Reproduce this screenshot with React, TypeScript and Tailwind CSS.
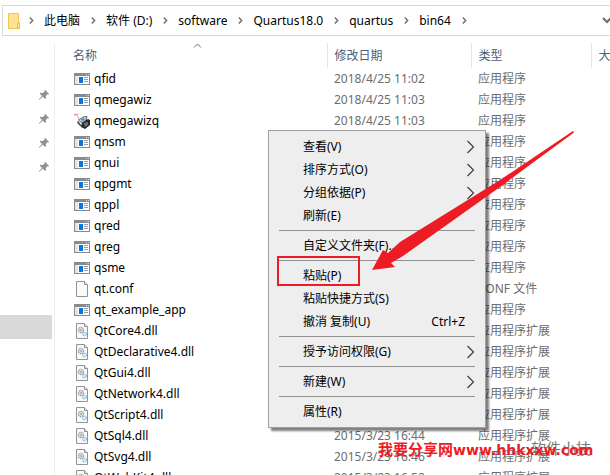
import type { ReactNode } from 'react';

type FileKind = 'app' | 'wizard' | 'conf' | 'dll';

interface FileEntry {
  name: string;
  date: string;
  kind: FileKind;
}

interface MenuEntry {
  label: string;
  shortcut?: string;
  submenu?: boolean;
  marked?: boolean;
}

const PATH = ['此电脑', '软件 (D:)', 'software', 'Quartus18.0', 'quartus', 'bin64'];

const TYPE_LABELS: Record<FileKind, string> = {
  app: '应用程序',
  wizard: '应用程序',
  conf: 'CONF 文件',
  dll: '应用程序扩展',
};

const FILES: FileEntry[] = [
  { name: 'qfid', date: '2018/4/25 11:02', kind: 'app' },
  { name: 'qmegawiz', date: '2018/4/25 11:03', kind: 'app' },
  { name: 'qmegawizq', date: '2018/4/25 11:03', kind: 'wizard' },
  { name: 'qnsm', date: '2018/4/25 11:03', kind: 'app' },
  { name: 'qnui', date: '2018/4/25 11:03', kind: 'app' },
  { name: 'qpgmt', date: '2018/4/25 11:03', kind: 'app' },
  { name: 'qppl', date: '2018/4/25 11:03', kind: 'app' },
  { name: 'qred', date: '2018/4/25 11:03', kind: 'app' },
  { name: 'qreg', date: '2018/4/25 11:03', kind: 'app' },
  { name: 'qsme', date: '2018/4/25 11:03', kind: 'app' },
  { name: 'qt.conf', date: '2018/4/25 11:03', kind: 'conf' },
  { name: 'qt_example_app', date: '2018/4/25 11:03', kind: 'app' },
  { name: 'QtCore4.dll', date: '2015/3/23 16:42', kind: 'dll' },
  { name: 'QtDeclarative4.dll', date: '2015/3/23 16:48', kind: 'dll' },
  { name: 'QtGui4.dll', date: '2015/3/23 16:44', kind: 'dll' },
  { name: 'QtNetwork4.dll', date: '2015/3/23 16:43', kind: 'dll' },
  { name: 'QtScript4.dll', date: '2015/3/23 16:45', kind: 'dll' },
  { name: 'QtSql4.dll', date: '2015/3/23 16:44', kind: 'dll' },
  { name: 'QtSvg4.dll', date: '2015/3/23 16:46', kind: 'dll' },
  { name: 'QtWebKit4.dll', date: '2015/3/23 16:52', kind: 'dll' },
];

const MENU: MenuEntry[][] = [
  [
    { label: '查看(V)', submenu: true },
    { label: '排序方式(O)', submenu: true },
    { label: '分组依据(P)', submenu: true },
    { label: '刷新(E)' },
  ],
  [{ label: '自定义文件夹(F)...' }],
  [
    { label: '粘贴(P)', marked: true },
    { label: '粘贴快捷方式(S)' },
    { label: '撤消 复制(U)', shortcut: 'Ctrl+Z' },
  ],
  [{ label: '授予访问权限(G)', submenu: true }],
  [{ label: '新建(W)', submenu: true }],
  [{ label: '属性(R)' }],
];

function FolderIcon() {
  return (
    <svg width="14" height="18" viewBox="0 0 14 18" className="shrink-0">
      <path d="M1.500 1.500h10v9.500h1v5.500h-11z" fill="#ffe394" stroke="#f0c64f" />
      <path d="M10.500 16V11.500l2-1V16z" fill="#fff0b8" stroke="#e9bb3d" />
    </svg>
  );
}

function Crumb({ children }: { children: ReactNode }) {
  return (
    <li className="flex items-center">
      <svg width="5" height="7" viewBox="0 0 5 7" className="mr-[10px] shrink-0">
        <path d="M.8.6 3.700 3.500.8 6.400" fill="none" stroke="#6d6d6d" strokeWidth="1.400" />
      </svg>
      {children}
    </li>
  );
}

function AppIcon() {
  return (
    <svg width="16" height="16" viewBox="0 0 16 16" shapeRendering="crispEdges">
      <path d="M0 2h16v12H0z" fill="#868b90" />
      <path d="M12 3h1v1h-1zM14 3h1v1h-1z" fill="#d5d8da" />
      <path d="M1 5h14v8H1z" fill="#fff" />
      <path d="M1 5h3v8H1z" fill="#e6e6e6" />
      <path d="M5 6h4v6H5z" fill="#0b75d8" />
      <path d="M10 6h4v1h-4zM10 8h4v1h-4zM10 10h4v1h-4z" fill="#9b9b9b" />
    </svg>
  );
}

function WizardIcon() {
  return (
    <svg width="16" height="16" viewBox="0 0 16 16">
      <path d="M0 2.500 1.500 1.200 3 2l1-1M3.500 3.500l1.500 2" fill="none" stroke="#e58a86" strokeWidth="1.100" />
      <path d="M8 9.500 14 6l2 1v5l-5 4-4-2z" fill="#242426" />
      <path d="M9.500 10.500l4-2 1 3-3.500 2.500z" fill="#6f7174" />
      <path d="M4.500 7 9 4l4-.5L12 7 8 10z" fill="#c3daec" stroke="#4c5a66" strokeWidth=".9" />
      <path d="M7 7l3-1.500M10.500 6 8 8.500" stroke="#2f6fa8" />
      <path d="M3.500 8.500 7 13" stroke="#4a4a4c" strokeWidth="1.600" />
      <path d="M3 10l3 3.500" stroke="#c4c4c4" />
    </svg>
  );
}

function PageIcon({ gears }: { gears?: boolean }) {
  return (
    <svg width="16" height="16" viewBox="0 0 16 16">
      <path d="M2.500.5h8l3 3v12h-11z" fill="#f9fafa" stroke="#8f9395" />
      <path d="M10.500.5v3h3" fill="#e3e5e6" stroke="#8f9395" />
      {gears && (
        <>
          <circle cx="7" cy="7" r="2.600" fill="#eceeef" stroke="#96999b" strokeWidth="1.200" strokeDasharray="1.300 .6" />
          <circle cx="7" cy="7" r="1" fill="none" stroke="#96999b" strokeWidth=".8" />
          <circle cx="10.500" cy="11" r="1.900" fill="#dcedf8" stroke="#8dbddd" strokeWidth="1.200" strokeDasharray="1.100 .5" />
        </>
      )}
    </svg>
  );
}

function FileIcon({ kind }: { kind: FileKind }) {
  if (kind === 'app') return <AppIcon />;
  if (kind === 'wizard') return <WizardIcon />;
  return <PageIcon gears={kind === 'dll'} />;
}

function PinIcon() {
  return (
    <svg width="12" height="12" viewBox="0 0 12 12">
      <path
        d="M7 .8 11.200 5l-1.200.5-.6-.2-1.600 1.800.2 2.200-1 .8-2.200-2.300L1.200 11l-.4-.4 3.100-3.700L1.800 4.800l.8-1 2.200.2L6.700 2.400 6.400 1.700z"
        fill="#8b959b"
      />
    </svg>
  );
}

function ContextMenu() {
  return (
    <div
      role="menu"
      className="absolute top-[130px] left-[268px] w-[218px] border border-[#a0a0a0] bg-[#eeeeee] py-1 text-black shadow-[3px_3px_2px_rgba(0,0,0,0.5)]"
    >
      {MENU.map((group, index) => (
        <div key={group[0].label}>
          {index > 0 && <hr className="my-[3px] mr-[10px] ml-[10px] border-[#919191]" />}
          {group.map((item) => (
            <button
              key={item.label}
              type="button"
              role="menuitem"
              className="relative flex h-[23px] w-full items-center justify-between pr-[10px] pl-[34px]"
            >
              <span>{item.label}</span>
              {item.shortcut && <span className="mr-[10px]">{item.shortcut}</span>}
              {item.submenu && (
                <svg width="9" height="14" viewBox="0 0 9 14">
                  <path d="M1.500 1l6 6-6 6" fill="none" stroke="#3b3b4d" strokeWidth="1.200" />
                </svg>
              )}
              {item.marked && (
                <span className="absolute -top-2 left-2 h-[30px] w-[83px] border-2 border-[#ed1c24]" />
              )}
            </button>
          ))}
        </div>
      ))}
    </div>
  );
}

export default function App() {
  return (
    <div className="relative flex h-screen flex-col overflow-hidden bg-white font-['Noto_Sans','Noto_Sans_CJK_SC',sans-serif] text-[12px] leading-4 text-black">
      <nav className="mt-[5px] ml-0.5 flex h-[31px] shrink-0 items-center border border-r-0 border-[#d9d9d9] pl-1">
        <FolderIcon />
        <ol className="ml-2 flex flex-1 items-center gap-[11px] whitespace-nowrap">
          {PATH.map((part) => (
            <Crumb key={part}>{part}</Crumb>
          ))}
          <Crumb>{null}</Crumb>
        </ol>
        <button type="button" aria-label="历史记录" className="-mr-0.5">
          <svg width="10" height="7" viewBox="0 0 10 7">
            <path d="M1 1l4 4 4-4" fill="none" stroke="#6d6d6d" strokeWidth="2" />
          </svg>
        </button>
      </nav>

      <div className="flex min-h-0 flex-1 pt-[7px]">
        <aside className="flex w-[55px] shrink-0 flex-col border-r border-[#eeeeee] pt-10">
          {[0, 1, 2, 3].map((pin) => (
            <span key={pin} className="flex h-6 items-center justify-end pr-1">
              <PinIcon />
            </span>
          ))}
          <span className="mt-[136px] mr-0.5 h-6 shrink-0 bg-[#d9d9d9]" />
        </aside>

        <main className="min-w-0 flex-1">
          <table className="w-full table-fixed border-collapse text-left whitespace-nowrap">
            <colgroup>
              <col className="w-[272px]" />
              <col className="w-[144px]" />
              <col className="w-[120px]" />
              <col />
            </colgroup>
            <thead className="text-[#4c607a]">
              <tr className="h-[25px]">
                <th className="relative border-r border-[#e5e5e5] pl-[18px] font-normal">
                  名称
                  <svg width="9" height="6" viewBox="0 0 9 6" className="absolute top-0 left-[138px]">
                    <path d="M1 4.500 4.500 1 8 4.500" fill="none" stroke="#6d6d6d" />
                  </svg>
                </th>
                <th className="border-r border-[#e5e5e5] pl-[7px] font-normal">修改日期</th>
                <th className="border-r border-[#e5e5e5] pl-[7px] font-normal">类型</th>
                <th className="overflow-hidden pl-[7px] font-normal">大小</th>
              </tr>
            </thead>
            <tbody className="text-[#6d6d6d]">
              {FILES.map((file) => (
                <tr key={file.name} className="h-[21px]">
                  <td className="pl-[19px] text-black">
                    <span className="flex items-center gap-1">
                      <FileIcon kind={file.kind} />
                      {file.name}
                    </span>
                  </td>
                  <td className="pl-[7px]">{file.date}</td>
                  <td className="pl-[7px]">{TYPE_LABELS[file.kind]}</td>
                  <td />
                </tr>
              ))}
            </tbody>
          </table>
        </main>
      </div>

      <ContextMenu />

      <svg width="204" height="142" viewBox="0 0 204 142" className="absolute top-[130px] left-[371px]">
        <path d="M202 1 203 2.500 129 57 32 126l-12 7 4 4L1 140l11-20 5 3 12-11L129 50z" fill="#ed1c24" />
      </svg>

      <p className="absolute top-[438px] left-[531px] text-[15px] leading-5 text-[#777777]">软件小技</p>
      <p className="absolute top-[440px] left-[378px] font-['DejaVu_Sans','Noto_Sans_CJK_SC',sans-serif] text-[15px] leading-5 font-bold whitespace-nowrap text-[#ed1c24]">
        我要分享网<span className="text-[14px]">www.hhkxxw.com</span>
      </p>
    </div>
  );
}
